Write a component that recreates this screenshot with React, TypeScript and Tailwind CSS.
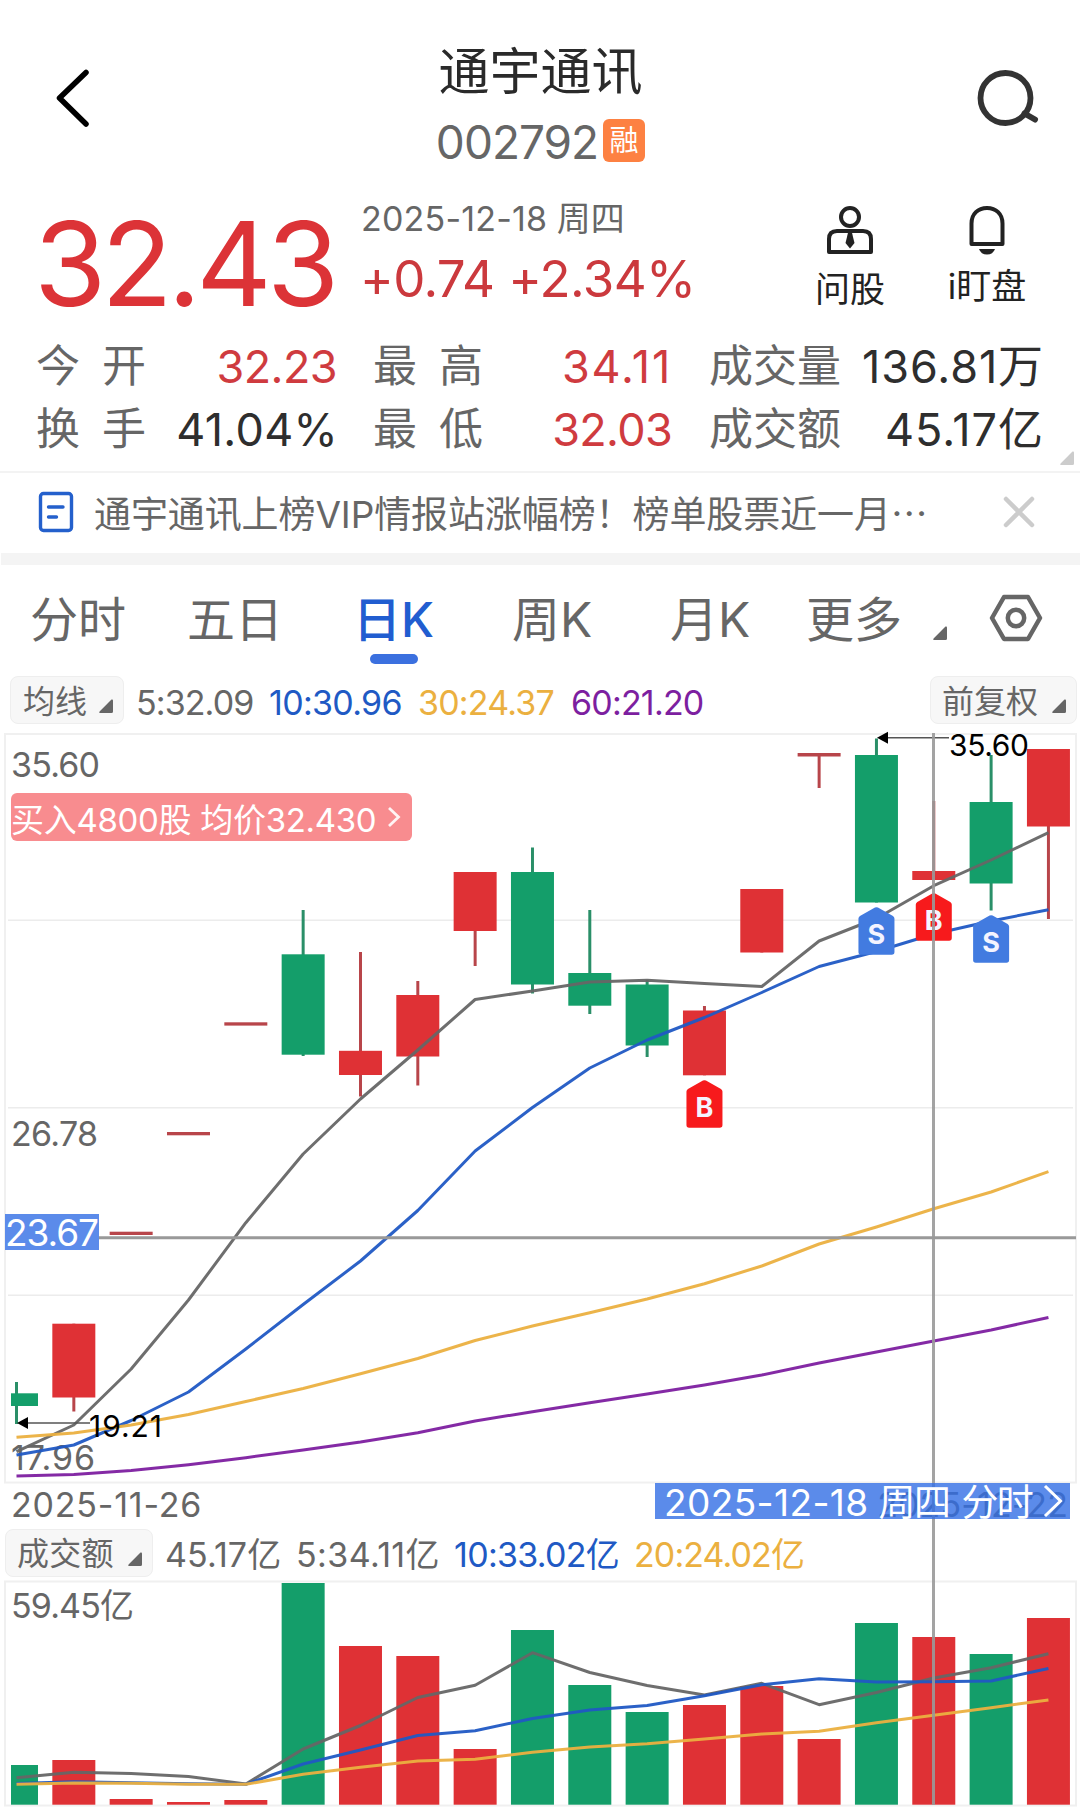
import type { ReactNode } from 'react';
import clsx from 'clsx';

const RED = '#df3135';
const GREEN = '#149e6a';
const WICK_RED = '#b8454a';
const WICK_GREEN = '#2a8f68';
const GRAY = '#666666';
const BLUE = '#2059c4';
const ORANGE = '#ebb040';
const PURPLE = '#7d1fa0';

const STEP = 57.33;
const cx = (i: number) => 16.5 + i * STEP;

type Candle = { up: boolean; top: number; bottom: number; high: number; low: number };

// [up, body top, body bottom, high, low] in chart pixels
const candles: Candle[] = ([
  [0, 1393.3, 1406, 1382, 1424],
  [1, 1323.7, 1397.5, 1323.7, 1411.5],
  [1, 1231.7, 1235, 1231.7, 1235],
  [1, 1132, 1135.3, 1132, 1135.3],
  [1, 1022.3, 1025.6, 1022.3, 1025.6],
  [0, 954.3, 1054.7, 910, 1056],
  [1, 1050.8, 1075, 952, 1096.5],
  [1, 995, 1056.5, 981, 1085.5],
  [1, 872, 931, 872, 966],
  [0, 872, 984.5, 847.5, 993.5],
  [0, 973, 1005.7, 910, 1014],
  [0, 984.5, 1045.5, 980, 1057],
  [1, 1010.5, 1075.3, 1006, 1075.3],
  [1, 889, 952.5, 889, 952.5],
  [1, 753, 756.5, 753, 788],
  [0, 755, 902.5, 738.5, 902.5],
  [1, 871, 880, 801, 880],
  [0, 802, 883.5, 755, 910.5],
  [1, 749, 826.5, 749, 919],
] as number[][]).map(([up, top, bottom, high, low]) => ({ up: up === 1, top, bottom, high, low }));

const ma5 = [1451.7, 1425, 1369, 1300, 1222.7, 1154, 1099, 1050, 999.5, 991, 982, 980.3, 983.5, 986.5, 941, 918.5, 885.7, 860, 832.7];
const ma10 = [1455, 1445, 1420.5, 1392, 1349, 1304.5, 1261, 1210.5, 1151, 1107.5, 1068, 1040, 1017.5, 992.5, 966.5, 951.5, 934, 921, 909.7];
const ma30 = [1437.3, 1433, 1425, 1414.5, 1401.5, 1388.5, 1373.7, 1358.5, 1340.5, 1326, 1312.7, 1299, 1283.7, 1266, 1244, 1227, 1208.7, 1192, 1171.7];
const ma60 = [1476, 1474.5, 1470.5, 1464.7, 1457.7, 1450, 1442, 1432.7, 1421, 1411.7, 1402.7, 1394, 1385, 1375, 1363, 1352, 1341, 1330, 1317.5];

const volTops = [1765, 1760, 1799, 1802, 1800, 1583, 1646, 1656, 1749, 1630, 1685, 1712, 1705, 1686, 1739, 1623, 1637, 1654, 1618];
const vol5 = [1777.7, 1772.3, 1773.5, 1776.5, 1784, 1749, 1725.5, 1697.5, 1685.3, 1652.7, 1672.5, 1685.5, 1695, 1683.3, 1704.7, 1692.5, 1678, 1667.7, 1653.7];
const vol10 = [1783.5, 1781.7, 1782.7, 1783.7, 1784.3, 1764, 1750, 1735.5, 1730.7, 1718.5, 1710, 1705.5, 1695.7, 1684.7, 1678.7, 1682, 1681.7, 1681, 1668.5];
const vol20 = [1784.3, 1783, 1783.3, 1784.3, 1784.3, 1774.3, 1767.3, 1761, 1759.3, 1752.3, 1747, 1743.7, 1739, 1734, 1731.3, 1722.7, 1715.3, 1707.7, 1700];

const markers = [
  { i: 12, y: 1080, type: 'B' },
  { i: 15, y: 907, type: 'S' },
  { i: 16, y: 893, type: 'B' },
  { i: 17, y: 915, type: 'S' },
];

const tabs = ['分时', '五日', '日K', '周K', '月K', '更多'];

function Line({ data, color }: { data: number[]; color: string }) {
  return (
    <polyline
      points={data.map((y, i) => `${cx(i)},${y}`).join(' ')}
      fill="none"
      stroke={color}
      strokeWidth={3}
      strokeLinejoin="round"
      strokeOpacity={0.95}
    />
  );
}

function Triangle({ className }: { className?: string }) {
  return (
    <svg viewBox="0 0 14 14" className={clsx('w-[14px] h-[14px]', className)}>
      <path d="M12.5 0.5 Q14 0 14 1.5 V12.5 Q14 14 12.5 14 H1 Q-0.4 14 0.6 12.6 Z" fill="currentColor" />
    </svg>
  );
}

type StatProps = { label: string; value: string; red?: boolean; className: string; valueClass: string };

function Stat({ label, value, red, className, valueClass }: StatProps) {
  return (
    <div className={clsx('flex items-center justify-between', className)}>
      <div className={clsx('flex justify-between -mt-0.5 text-[44px] text-[#666]', label.length === 2 ? 'w-[110px]' : 'w-[132px]')}>
        {label.split('').map((c) => <span key={c}>{c}</span>)}
      </div>
      <div className={clsx('text-[45px]', valueClass, red ? 'text-[#cf3b3f]' : 'text-[#2e2e2e]')}>{value}</div>
    </div>
  );
}

function Pill({ children, className }: { children: ReactNode; className: string }) {
  return (
    <div className={clsx('flex items-center h-12 rounded-lg bg-[#f7f7f7] border border-[#eeeeee] text-[32px] text-[#666]', className)}>
      {children}
    </div>
  );
}

function Marker({ x, y, type }: { x: number; y: number; type: string }) {
  return (
    <g transform={`translate(${x} ${y})`}>
      <path
        d="M-1.5 0.6 Q0 -0.3 1.5 0.6 L16.5 9 Q18 10 18 11.5 V45 Q18 47.7 15.3 47.7 H-15.3 Q-18 47.7 -18 45 V11.5 Q-18 10 -16.5 9 Z"
        fill={type === 'B' ? '#f71a1c' : '#427be0'}
      />
      <text x="0" y="37" textAnchor="middle" fontSize="27" fontWeight="700" fill="#f4f4ff">{type}</text>
    </g>
  );
}

function PriceChart() {
  return (
    <svg viewBox="0 733 1080 750" className="block w-[1080px] h-[750px] overflow-visible">
      <rect x="5" y="734" width="1071" height="748.5" fill="none" stroke="#f0f0f0" strokeWidth="2" />
      {[920.3, 1107.7, 1295.3].map((y) => (
        <line key={y} x1="8" x2="1073" y1={y} y2={y} stroke="#ececec" strokeWidth="1.5" />
      ))}
      <text x="11" y="777" fontSize="34" fill={GRAY} textLength="89">35.60</text>
      <text x="11" y="1146" fontSize="34" fill={GRAY} textLength="87">26.78</text>
      <text x="11" y="1470" fontSize="34" fill={GRAY} textLength="84">17.96</text>

      {candles.map((c, i) => {
        const left = i === 0 ? 11 : cx(i) - 21.5;
        const right = i === 0 ? 38 : cx(i) + 21.5;
        return (
          <g key={i}>
            {c.low - c.high > 5 && (
              <line x1={cx(i)} x2={cx(i)} y1={c.high} y2={c.low} stroke={c.up ? WICK_RED : WICK_GREEN} strokeWidth="3" />
            )}
            <rect x={left} y={c.top} width={right - left} height={c.bottom - c.top} fill={c.bottom - c.top < 5 ? WICK_RED : c.up ? RED : GREEN} />
          </g>
        );
      })}

      <Line data={ma5} color={GRAY} />
      <Line data={ma10} color={BLUE} />
      <Line data={ma30} color={ORANGE} />
      <Line data={ma60} color={PURPLE} />

      <g fill="#000">
        <path d="M17 1423 L28 1417 V1429 Z" />
        <line x1="28" x2="90" y1="1423" y2="1423" stroke="#555" strokeWidth="1.5" />
        <text x="89" y="1436.5" fontSize="30" textLength="73">19.21</text>
        <path d="M877 737.7 L888 731.7 V743.7 Z" />
        <line x1="888" x2="949" y1="737.7" y2="737.7" stroke="#555" strokeWidth="1.5" />
        <text x="949" y="755.5" fontSize="30" textLength="80">35.60</text>
      </g>

      {markers.map((m) => <Marker key={m.i} x={cx(m.i)} y={m.y} type={m.type} />)}

      {/* horizontal crosshair */}
      <line x1="99" x2="1076" y1="1237.7" y2="1237.7" stroke="#999" strokeWidth="3" />
      <rect x="5" y="1214" width="94" height="36" fill="#5b8bea" />
      <text x="5" y="1246" fontSize="37" fill="#fff" textLength="94">23.67</text>
    </svg>
  );
}

function VolumeChart() {
  return (
    <svg viewBox="0 1580 1080 236" className="block w-[1080px] h-[236px]">
      <rect x="5" y="1581.5" width="1071" height="224" fill="none" stroke="#f0f0f0" strokeWidth="2" />
      <text x="11" y="1618" fontSize="34" fill={GRAY} textLength="123">59.45亿</text>
      {volTops.map((y, i) => {
        const left = i === 0 ? 11 : cx(i) - 21.5;
        const right = i === 0 ? 38 : cx(i) + 21.5;
        return <rect key={i} x={left} y={y} width={right - left} height={1804.7 - y} fill={candles[i].up ? RED : GREEN} />;
      })}
      <Line data={vol5} color={GRAY} />
      <Line data={vol10} color={BLUE} />
      <Line data={vol20} color={ORANGE} />
    </svg>
  );
}

export default function App() {
  return (
    <div className="w-[1080px] h-[1816px] overflow-hidden bg-white leading-none whitespace-nowrap font-[Inter,'Noto_Sans_CJK_SC',sans-serif]">
      {/* title bar */}
      <header className="flex justify-between h-[180px] pl-[54px] pr-[40px]">
        <svg viewBox="0 0 40 64" className="w-10 h-16 mt-[66px]">
          <path d="M32 6.5 L5.5 32 L32 58" fill="none" stroke="#000" strokeWidth="5.5" strokeLinecap="round" strokeLinejoin="round" />
        </svg>
        <div className="flex flex-col items-center pt-[46px] ml-[11px]">
          <h1 className="text-[51px] font-normal text-[#2a2a2a]">通宇通讯</h1>
          <div className="flex items-center mt-[19px]">
            <span className="text-[46px] tracking-[-1px] text-[#666] mt-[3px]">002792</span>
            <span className="flex items-center justify-center w-[42px] h-[43px] ml-[5px] rounded-md bg-[#fd8142] text-[29px] text-white">融</span>
          </div>
        </div>
        <svg viewBox="0 0 64 60" className="w-16 h-[60px] mt-[68px]">
          <circle cx="29.5" cy="30" r="25" fill="none" stroke="#333" strokeWidth="5.8" />
          <path d="M48.5 45.5 L59 51.5" stroke="#333" strokeWidth="6" strokeLinecap="round" />
        </svg>
      </header>

      {/* price */}
      <section className="flex h-[155px] pl-[34px]">
        <div className="w-[326px] pt-[25px] text-[117px] tracking-[-5px] text-[#dc3337]">32.43</div>
        <div className="w-[453px] pt-[22px]">
          <div className="text-[34px] text-[#666] pl-px"><span className="tracking-[0.2px]">2025-12-18</span> 周四</div>
          <div className="mt-[17px] text-[51px] tracking-[-0.6px] text-[#cb393d]">+0.74 +2.34%</div>
        </div>
        <div className="flex flex-col items-center w-[74px] pt-[25px]">
          <svg viewBox="0 0 48 50" className="w-12 h-[50px]" fill="none" stroke="#222" strokeWidth="4">
            <circle cx="24" cy="12" r="9" />
            <path d="M3 47 V34 Q3 26 11 26 H37 Q45 26 45 34 V47 Z" strokeLinejoin="round" />
            <path d="M22.2 27 H25.8 L28.5 38 L24 43.5 L19.5 38 Z" fill="#222" stroke="none" />
          </svg>
          <span className="mt-[17px] text-[35px] text-[#222]">问股</span>
        </div>
        <div className="flex flex-col items-center w-[80px] pt-[25px] ml-[60px]">
          <svg viewBox="0 0 40 50" className="w-10 h-[50px]">
            <path d="M4.5 39 V18.5 C4.5 9 11 3 20 3 S35.5 9 35.5 18.5 V39 Z" fill="none" stroke="#222" strokeWidth="4" strokeLinejoin="round" />
            <path d="M12 44 H28 Q26 49.5 20 49.5 T12 44 Z" fill="#222" />
          </svg>
          <span className="mt-[14px] text-[35px] text-[#222]">i盯盘</span>
        </div>
      </section>

      {/* stats */}
      <section className="relative h-[136px] pl-[36px]">
        <div className="flex items-center h-[63px] gap-[38px]">
          <Stat label="今开" value="32.23" red className="w-[299px]" valueClass="-mr-[2px] tracking-[-0.6px]" />
          <Stat label="最高" value="34.11" red className="w-[298px]" valueClass="-mr-px tracking-[1.8px]" />
          <Stat label="成交量" value="136.81万" className="w-[334px]" valueClass="-mr-px tracking-[0.9px]" />
        </div>
        <div className="flex items-center h-[63px] gap-[38px]">
          <Stat label="换手" value="41.04%" className="w-[299px]" valueClass="-mr-[3px] tracking-[0.3px]" />
          <Stat label="最低" value="32.03" red className="w-[298px]" valueClass="-mr-px tracking-[-0.7px]" />
          <Stat label="成交额" value="45.17亿" className="w-[334px]" valueClass="-mr-px tracking-[1px]" />
        </div>
        <Triangle className="absolute right-[6px] bottom-[6px] w-4 h-4 text-[#ccc]" />
      </section>

      {/* notice */}
      <section className="flex items-center h-[82px] border-t-2 border-[#f3f3f3] pl-[38px] pr-[45px]">
        <svg viewBox="0 0 36 42" className="w-9 h-[42px] -mt-0.5" fill="none" stroke="#2460cc" strokeWidth="3.4" strokeLinecap="round">
          <rect x="2.5" y="2.5" width="31" height="37" rx="3" />
          <path d="M10.5 16 H25 M10.5 26 H18.5" />
        </svg>
        <p className="ml-[20px] text-[37px] tracking-[-0.1px] text-[#666]">
          通宇通讯上榜VIP情报站涨幅榜！榜单股票近一月<span className="font-['Noto_Sans_CJK_SC',sans-serif]">⋯</span>
        </p>
        <svg viewBox="0 0 32 32" className="w-8 h-8 ml-auto -mt-0.5">
          <path d="M3 3 L29 29 M29 3 L3 29" stroke="#ccc" strokeWidth="4.5" strokeLinecap="round" />
        </svg>
      </section>
      <div className="h-3 ml-px bg-[#f4f4f4]" />

      {/* period tabs */}
      <nav className="grid grid-cols-[157px_166px_159px_158px_136px_126px_50px] h-[108px] pl-[30px] pt-[31px] text-[48px] text-[#666]">
        {tabs.map((t) => (
          <div key={t} className={clsx('flex flex-col w-fit', t === '日K' && 'items-center font-medium text-[#215dd0]')}>
            {t}
            {t === '日K' && <span className="w-12 h-[10px] mt-[10px] rounded-full bg-[#3b70df]" />}
          </div>
        ))}
        <svg viewBox="0 0 60 52" className="w-[60px] h-[52px] -mt-[4px] ml-[54px]" fill="none" stroke="#666" strokeWidth="4.5">
          <path d="M18 5 H42 L54 26 L42 47 H18 L6 26 Z" strokeLinejoin="round" />
          <circle cx="30" cy="26" r="8.2" />
        </svg>
      </nav>

      {/* moving averages */}
      <div className="relative flex items-center h-[60px] pl-[10px] pb-[6px] text-[34px]">
        <Triangle className="absolute left-[933px] -top-[47px] text-[#666]" />
        <Pill className="w-[114px] pl-[12px]"><span className="mt-[3px]">均线</span><Triangle className="ml-[12px] mt-[12px]" /></Pill>
        <div className="flex flex-1 pl-[12px] pt-[6px]">
          <span className="w-[133px] tracking-[-0.9px] text-[#666]">5:32.09</span>
          <span className="w-[149px] tracking-[-0.7px] text-[#2059c4]">10:30.96</span>
          <span className="w-[153px] tracking-[-0.8px] text-[#ebb040]">30:24.37</span>
          <span className="tracking-[-0.8px] text-[#7d1fa0]">60:21.20</span>
        </div>
        <Pill className="w-[147px] mr-[3px] pl-[11px]"><span className="mt-[3px]">前复权</span><Triangle className="ml-[14px] mt-[12px]" /></Pill>
      </div>

      <main className="relative">
        <PriceChart />
        <div className="absolute left-[11px] top-[60px] flex items-center w-[401px] h-12 rounded-md bg-[#f88c8f] text-[33px] text-white">
          <span className="tracking-[-0.3px] mt-[6px]">买入4800股 均价32.430</span>
          <svg viewBox="0 0 14 22" className="w-[14px] h-[22px] ml-auto mr-[11px]">
            <path d="M2 2 L11.5 11 L2 20" fill="none" stroke="#fff" strokeOpacity="0.9" strokeWidth="2.8" />
          </svg>
        </div>

        {/* date axis */}
        <div className="flex justify-between items-center h-[44px] pl-[11px] pr-[12px] text-[34px] tracking-[0.8px] text-[#666]">
          <span>2025-11-26</span>
          <span className="tracking-[0.1px]">2025-12-22</span>
        </div>

        {/* turnover */}
        <div className="flex items-center h-[53px] pl-[5px] pb-[2px] text-[34px] text-[#666]">
          <Pill className="w-[148px] pl-[11px]"><span className="mt-[3px] tracking-[0.3px]">成交额</span><Triangle className="ml-[14px] mt-[13px]" /></Pill>
          <span className="w-[131px] ml-[12px] pt-[5px] tracking-[0.1px]">45.17亿</span>
          <span className="w-[158px] pt-[5px] tracking-[0.4px]">5:34.11亿</span>
          <span className="w-[180px] pt-[5px] tracking-[-0.7px] text-[#2059c4]">10:33.02亿</span>
          <span className="pt-[5px] tracking-[-0.9px] text-[#ebb040]">20:24.02亿</span>
        </div>
        <VolumeChart />

        {/* vertical crosshair and its date tag */}
        <div className="absolute left-[932px] top-0 w-[3px] h-[1072px] bg-[#999]/90" />
        <div className="absolute left-[655px] top-[750px] flex items-center w-[415px] h-9 pl-[9px] bg-[#326ee5]/80 text-[37px] text-white">
          <span className="mt-[3px] tracking-[0.4px]">2025-12-18</span>
          <span className="mt-[3px] ml-[10px] tracking-[-1.6px]">周四</span>
          <span className="mt-[3px] ml-[12px] tracking-[-1.6px]">分时</span>
          <svg viewBox="0 0 20 34" className="w-5 h-[34px] ml-auto mr-[7px]">
            <path d="M2 2 L17.5 17 L2 32" fill="none" stroke="#fff" strokeWidth="3" />
          </svg>
        </div>
      </main>
    </div>
  );
}
